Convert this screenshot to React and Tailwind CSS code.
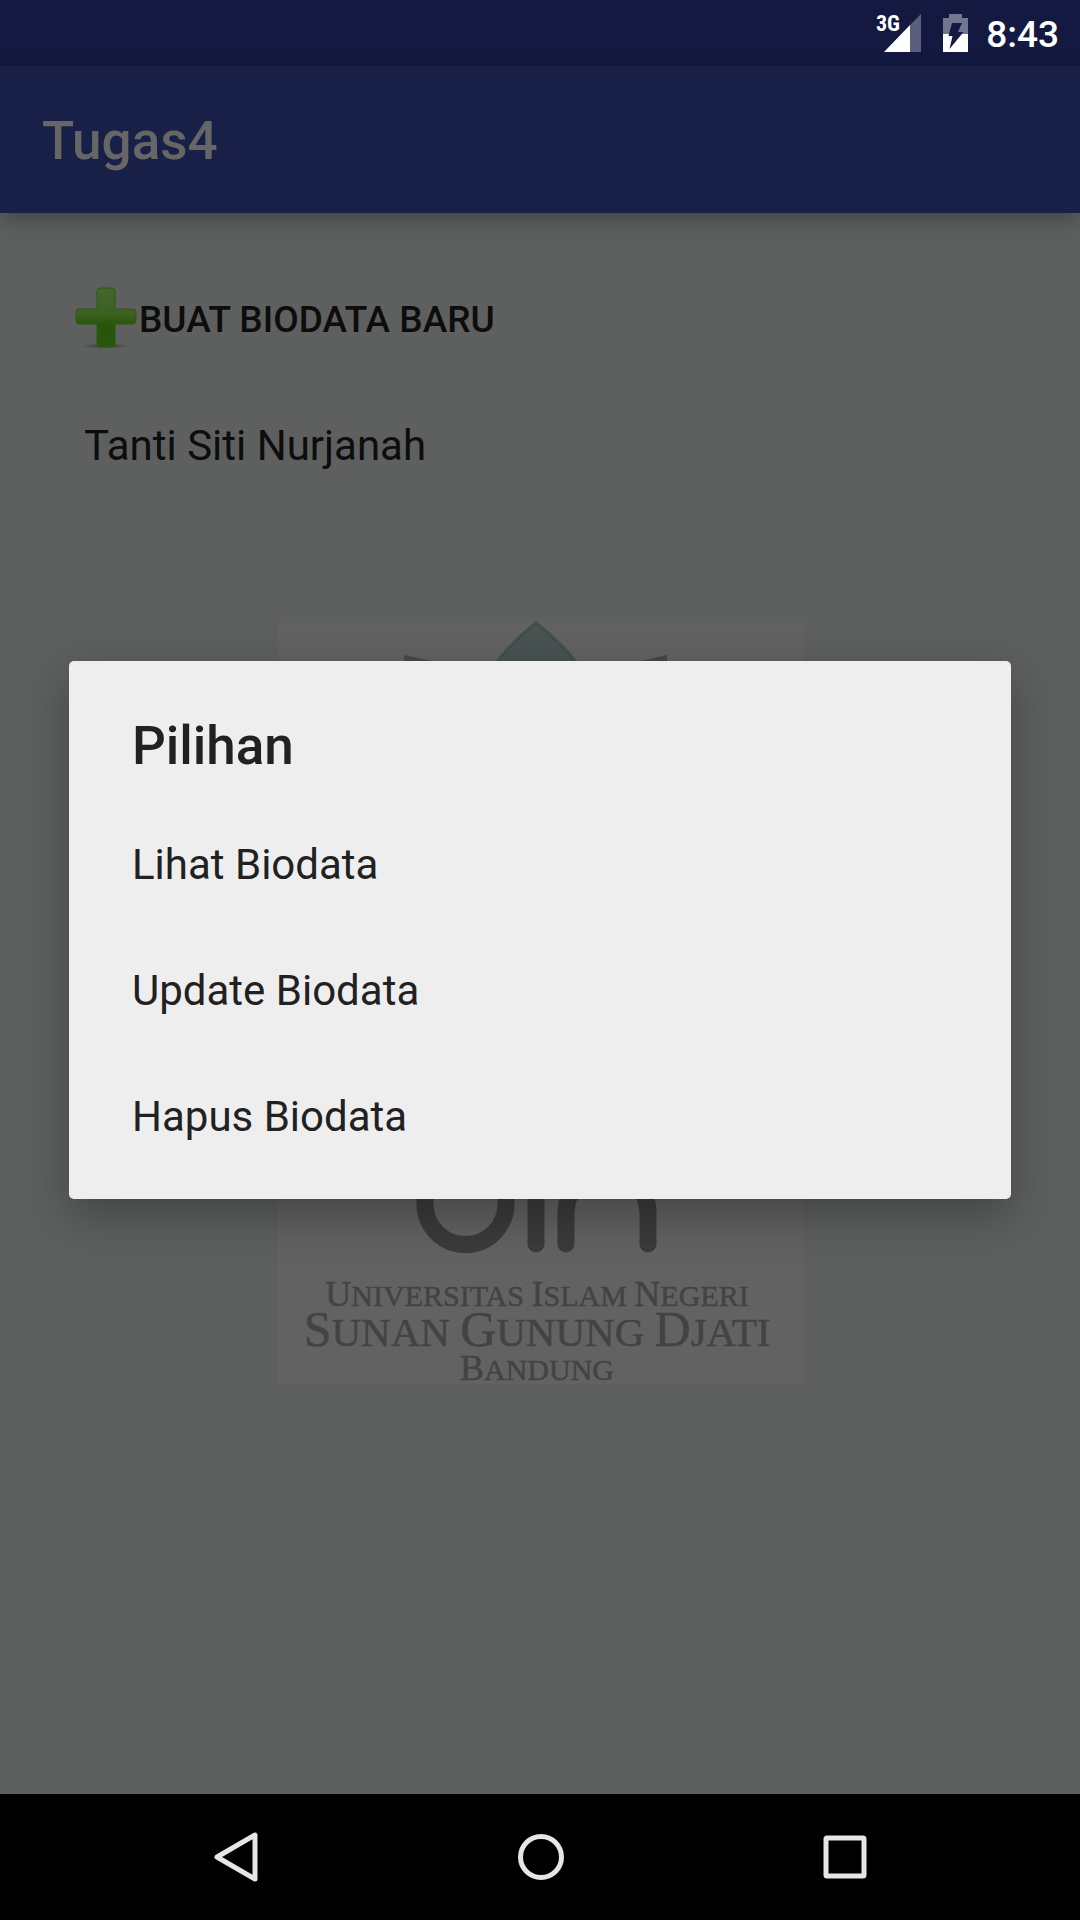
const options = ["Lihat Biodata", "Update Biodata", "Hapus Biodata"];

function SignalIcon() {
  return (
    <svg width="46" height="42" viewBox="0 0 46 42" aria-label="3G" role="img">
      <path d="M45 2V40H34V13z" fill="#5c5f7c" />
      <path d="M34 13V40H8z" fill="#fff" />
      <text
        x="0"
        y="19"
        fill="#fff"
        fontSize="22"
        fontWeight="700"
        fontFamily="'Roboto Condensed', 'Liberation Sans Narrow', Roboto, sans-serif"
      >
        3G
      </text>
    </svg>
  );
}

function BatteryIcon() {
  return (
    <svg width="25" height="38" viewBox="0 0 25 38" aria-hidden="true">
      <path d="M6 0H19V4H25V20H0V4H6z" fill="#73768f" />
      <path d="M0 20H25V38H0z" fill="#fff" />
      <path d="M9 9H19L15 18H20.500L6.500 35L9.500 22H5.500z" fill="#131940" />
    </svg>
  );
}

function PlusIcon() {
  return (
    <svg width="65" height="64" viewBox="0 0 65 64" aria-hidden="true">
      <defs>
        <linearGradient id="leaf" x1="0" y1="0" x2="0" y2="1">
          <stop offset="0" stopColor="#466530" />
          <stop offset="0.45" stopColor="#3b6020" />
          <stop offset="0.62" stopColor="#285609" />
          <stop offset="1" stopColor="#28560a" />
        </linearGradient>
        <radialGradient id="ground">
          <stop offset="0" stopColor="#2c3029" />
          <stop offset="0.4" stopColor="#474947" />
          <stop offset="1" stopColor="#5d605e" stopOpacity="0" />
        </radialGradient>
      </defs>
      <ellipse cx="32" cy="60" rx="31" ry="3" fill="url(#ground)" />
      <path
        d="M26 2H38Q41 2 41 5V23H59Q62 23 62 26V35Q62 38 59 38H41V58Q41 61 38 61H26Q23 61 23 58V38H5Q2 38 2 35V26Q2 23 5 23H23V5Q23 2 26 2z"
        fill="url(#leaf)"
        stroke="#31580f"
        strokeWidth="1"
      />
    </svg>
  );
}

function CampusLogo() {
  return (
    <svg
      className="col-start-1 row-start-1 place-self-center overflow-visible"
      width="525"
      height="761"
      viewBox="278 623 525 761"
      role="img"
      aria-label="Universitas Islam Negeri Sunan Gunung Djati Bandung"
    >
      <rect x="278" y="623" width="525" height="761" fill="#626262" />
      <path d="M536 623Q514 640 497 662L480 700H592L576 662Q558 640 536 623z" fill="#485352" stroke="#444e4d" strokeWidth="3" />
      <path d="M404 655L436 662L470 680H404zM667 655L637 662L600 680H667z" fill="#444848" />
      <g fill="none" stroke="#3b3b3b" strokeWidth="17" strokeLinecap="round">
        <path d="M425 1150V1204A40 40 0 0 0 506 1204V1150" />
        <path d="M536 1150V1244" />
        <path d="M566 1244V1213A41 41 0 0 1 648 1213V1244" />
      </g>
      <g fill="#424342" stroke="#424342" strokeWidth="0.5" textAnchor="middle" fontFamily="'Liberation Serif', serif">
        <text x="537" y="1306" fontSize="30">
          <tspan fontSize="36">U</tspan>NIVERSITAS <tspan fontSize="36">I</tspan>SLAM <tspan fontSize="36">N</tspan>EGERI
        </text>
        <text x="537" y="1346" fontSize="41">
          <tspan fontSize="50">S</tspan>UNAN <tspan fontSize="50">G</tspan>UNUNG <tspan fontSize="50">D</tspan>JATI
        </text>
        <text x="537" y="1380" fontSize="30">
          <tspan fontSize="36">B</tspan>ANDUNG
        </text>
      </g>
    </svg>
  );
}

function NavButton({ label, children }) {
  return (
    <button type="button" aria-label={label} className="flex h-full w-[210px] items-center justify-center">
      <svg width="60" height="60" viewBox="0 0 60 60" fill="none" stroke="#e6e6e6" strokeWidth="5" strokeLinejoin="round">
        {children}
      </svg>
    </button>
  );
}

export default function App() {
  return (
    <div className="relative flex min-h-screen flex-col bg-[#5d605e] font-[Roboto,sans-serif] text-[#0d0d0d]">
      <div className="flex h-[66px] items-center justify-end bg-[#131940] pr-[21px] text-white">
        <SignalIcon />
        <div className="ml-[21px] mr-[18px]">
          <BatteryIcon />
        </div>
        <time className="pt-[3px] text-[37px] font-medium leading-[44px]">8:43</time>
      </div>

      <header className="z-10 flex h-[147px] items-center bg-[#192047] px-[42px] pt-[3px] shadow-[0_6px_20px_rgba(0,0,0,0.3)]">
        <h1 className="text-[53px] font-medium leading-[62px] text-[#666666]">Tugas4</h1>
      </header>

      <main className="grid flex-1">
        <CampusLogo />
        <div className="col-start-1 row-start-1 flex flex-col p-[42px]">
          <button type="button" className="flex h-[126px] items-center self-start pl-[32px] text-[37px] font-medium leading-[44px]">
            <PlusIcon />
            <span className="pt-[3px]">BUAT BIODATA BARU</span>
          </button>
          <ul>
            <li className="flex h-[126px] items-center px-[42px] pt-[3px] text-[42px] leading-[50px]">Tanti Siti Nurjanah</li>
          </ul>
        </div>
      </main>

      <nav className="flex h-[126px] items-center justify-center gap-[94px] bg-black">
        <NavButton label="Kembali">
          <path d="M49 8V52L11 30z" />
        </NavButton>
        <NavButton label="Beranda">
          <circle cx="31" cy="30" r="20.500" />
        </NavButton>
        <NavButton label="Terbaru">
          <rect x="12" y="11" width="38" height="38" rx="1" />
        </NavButton>
      </nav>

      <div className="absolute inset-0 z-20 flex items-center px-[69px] pt-[66px] pb-[126px]">
        <section
          role="dialog"
          aria-labelledby="dialog-title"
          className="w-full rounded-[5px] bg-[#eeeeee] pt-[54px] pb-[19px] text-[#212121] shadow-[0_16px_48px_rgba(0,0,0,0.3)]"
        >
          <h2 id="dialog-title" className="mb-[25px] px-[63px] text-[53px] font-medium leading-[62px]">
            Pilihan
          </h2>
          {options.map((option) => (
            <button
              key={option}
              type="button"
              className="flex h-[126px] w-full items-center px-[63px] text-left text-[42px] leading-[50px]"
            >
              {option}
            </button>
          ))}
        </section>
      </div>
    </div>
  );
}
